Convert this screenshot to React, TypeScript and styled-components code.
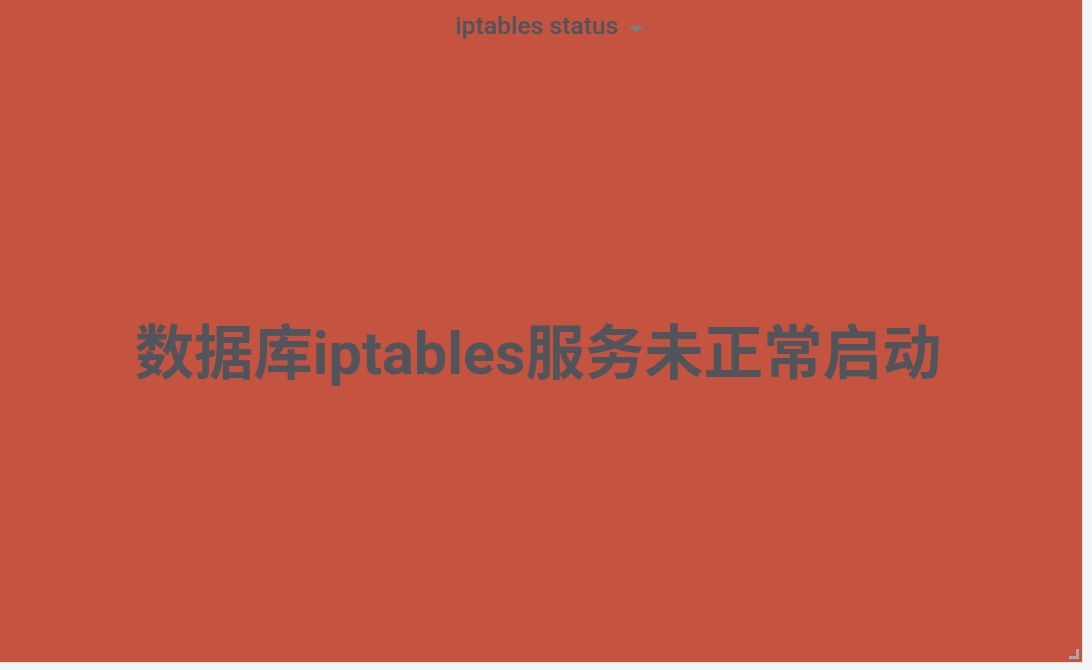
import React from "react";
import styled, { createGlobalStyle } from "styled-components";

const Global = createGlobalStyle`
  html, body { margin: 0; padding: 0; background: #f4f5f8; }
  body { font-family: Roboto, "Noto Sans CJK SC", sans-serif; }
`;

const Page = styled.div`
  width: 1092px;
  height: 670px;
  box-sizing: border-box;
  padding: 0 9px 7px 0;
  display: flex;
`;

const Panel = styled.div`
  position: relative;
  flex: 1;
  background: #c45340;
  border-right: 1px solid #e0e2e8;
  border-bottom: 1px solid #e0e2e8;
  display: flex;
  flex-direction: column;
`;

const Header = styled.div`
  height: 54px;
  display: flex;
  justify-content: center;
  align-items: flex-start;
  padding: 10px 0 0 17px;
  box-sizing: border-box;
  gap: 10px;
`;

const Title = styled.span`
  font-family: Roboto, sans-serif;
  font-weight: 500;
  font-size: 24.7px;
  line-height: 32px;
  color: #52545c;
`;

const Caret = styled.span`
  margin-top: 16px;
  width: 0;
  height: 0;
  border-left: 8px solid transparent;
  border-right: 8px solid transparent;
  border-top: 6px solid #7b7f8a;
`;

const Body = styled.div`
  flex: 1;
  display: flex;
  align-items: center;
  justify-content: center;
  padding-bottom: 20px;
  padding-right: 6px;
`;

const Value = styled.span`
  font-family: Roboto, "Noto Sans CJK SC", sans-serif;
  font-weight: 700;
  font-size: 59.4px;
  color: #52545c;
  white-space: nowrap;
`;

const Resize = styled.div`
  position: absolute;
  right: 3px;
  bottom: 3px;
  width: 10px;
  height: 10px;
  border-right: 3px solid #a4a8b1;
  border-bottom: 3px solid #a4a8b1;
  box-sizing: border-box;
`;

export default function App() {
  return (
    <>
      <Global />
      <Page>
        <Panel>
          <Header>
            <Title>iptables status</Title>
            <Caret />
          </Header>
          <Body>
            <Value>数据库iptables服务未正常启动</Value>
          </Body>
          <Resize />
        </Panel>
      </Page>
    </>
  );
}
